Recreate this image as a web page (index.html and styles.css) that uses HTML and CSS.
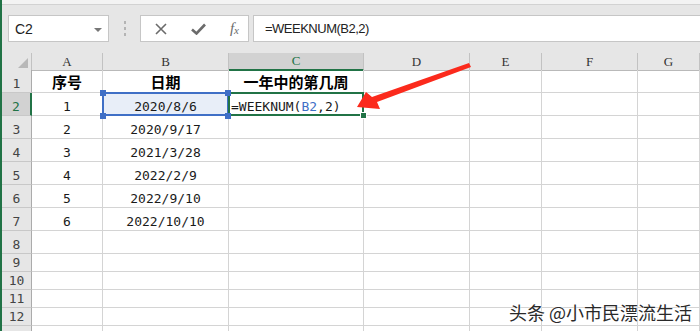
FILE: index.html
```html
<!DOCTYPE html>
<html lang="zh-CN">
<head>
<meta charset="UTF-8">
<title>WEEKNUM</title>
<link rel="stylesheet" href="styles.css">
</head>
<body>
<div class="app">
    <div class="topbar"></div>
    <div class="toolbar">
        <div class="namebox">
            <span>C2</span>
            <span class="drop"></span>
        </div>
        <div class="grip"><i></i><i></i><i></i></div>
        <div class="buttons">
            <svg width="12" height="12" viewBox="0 0 12 12"><path d="M1 1L11 11M11 1L1 11" stroke="#6b6b6b" stroke-width="1.6" fill="none"/></svg>
            <svg width="15" height="12" viewBox="0 0 15 12"><path d="M1 6.5L5.5 10.5L14 1.5" stroke="#6b6b6b" stroke-width="2.6" fill="none"/></svg>
            <span class="fx">f<sub>x</sub></span>
        </div>
        <div class="formula">=WEEKNUM(B2,2)</div>
    </div>

    <div class="sheet">
        <div class="row head">
            <div class="corner"><span class="tri"></span></div>
            <div class="col">A</div>
            <div class="col">B</div>
            <div class="col sel">C</div>
            <div class="col">D</div>
            <div class="col">E</div>
            <div class="col">F</div>
            <div class="col">G</div>
        </div>
        <div class="row">
            <div class="num">1</div>
            <div class="cell title">序号</div>
            <div class="cell title">日期</div>
            <div class="cell title">一年中的第几周</div>
            <div class="cell"></div><div class="cell"></div><div class="cell"></div><div class="cell"></div>
        </div>
        <div class="row">
            <div class="num sel">2</div>
            <div class="cell">1</div>
            <div class="cell ref">2020/8/6<i class="h tl"></i><i class="h tr"></i><i class="h bl"></i><i class="h br"></i></div>
            <div class="cell active">=WEEKNUM(<span class="blue">B2</span>,2)<i class="handle"></i></div>
            <div class="cell"></div><div class="cell"></div><div class="cell"></div><div class="cell"></div>
        </div>
        <div class="row">
            <div class="num">3</div>
            <div class="cell">2</div>
            <div class="cell">2020/9/17</div>
            <div class="cell"></div><div class="cell"></div><div class="cell"></div><div class="cell"></div><div class="cell"></div>
        </div>
        <div class="row">
            <div class="num">4</div>
            <div class="cell">3</div>
            <div class="cell">2021/3/28</div>
            <div class="cell"></div><div class="cell"></div><div class="cell"></div><div class="cell"></div><div class="cell"></div>
        </div>
        <div class="row">
            <div class="num">5</div>
            <div class="cell">4</div>
            <div class="cell">2022/2/9</div>
            <div class="cell"></div><div class="cell"></div><div class="cell"></div><div class="cell"></div><div class="cell"></div>
        </div>
        <div class="row">
            <div class="num">6</div>
            <div class="cell">5</div>
            <div class="cell">2022/9/10</div>
            <div class="cell"></div><div class="cell"></div><div class="cell"></div><div class="cell"></div><div class="cell"></div>
        </div>
        <div class="row">
            <div class="num">7</div>
            <div class="cell">6</div>
            <div class="cell">2022/10/10</div>
            <div class="cell"></div><div class="cell"></div><div class="cell"></div><div class="cell"></div><div class="cell"></div>
        </div>
        <div class="row">
            <div class="num">8</div>
            <div class="cell"></div><div class="cell"></div><div class="cell"></div><div class="cell"></div><div class="cell"></div><div class="cell"></div><div class="cell"></div>
        </div>
        <div class="row short">
            <div class="num">9</div>
            <div class="cell"></div><div class="cell"></div><div class="cell"></div><div class="cell"></div><div class="cell"></div><div class="cell"></div><div class="cell"></div>
        </div>
        <div class="row short">
            <div class="num">10</div>
            <div class="cell"></div><div class="cell"></div><div class="cell"></div><div class="cell"></div><div class="cell"></div><div class="cell"></div><div class="cell"></div>
        </div>
        <div class="row short">
            <div class="num">11</div>
            <div class="cell"></div><div class="cell"></div><div class="cell"></div><div class="cell"></div><div class="cell"></div><div class="cell"></div><div class="cell"></div>
        </div>
        <div class="row short">
            <div class="num">12</div>
            <div class="cell"></div><div class="cell"></div><div class="cell"></div><div class="cell"></div><div class="cell"></div><div class="cell"></div><div class="cell"></div>
        </div>
        <div class="row short">
            <div class="num"></div>
            <div class="cell"></div><div class="cell"></div><div class="cell"></div><div class="cell"></div><div class="cell"></div><div class="cell"></div><div class="cell"></div>
        </div>
    </div>
</div>

<svg class="arrow" width="700" height="331" viewBox="0 0 700 331">
    <polygon points="357,107 366,92 372,97 469,63 471,67 377,102 380,109" fill="#fb2a1c"/>
</svg>

<div class="mark">头条 @小市民漂流生活</div>
</body>
</html>
```

FILE: styles.css
```css
body {
    margin: 0;
    width: 700px;
    height: 331px;
    overflow: hidden;
    position: relative;
    background-color: #fff;
    font-family: "DejaVu Sans Mono", "Noto Sans CJK SC", monospace;
}
.app {
    height: 331px;
    border-left: 2px solid #217346;
}
.topbar {
    height: 4px;
    background-color: #f3f3f3;
    border-bottom: 1px solid #d2d2d2;
}
.toolbar {
    height: 48px;
    box-sizing: border-box;
    padding: 10px 0 0 6px;
    background-color: #e6e6e6;
    display: flex;
    align-items: flex-start;
}
.namebox, .buttons, .formula {
    height: 27px;
    box-sizing: border-box;
    background-color: #fff;
    border: 1px solid #c6c6c6;
    display: flex;
    align-items: center;
}
.namebox {
    width: 101px;
    padding: 0 6px;
    justify-content: space-between;
    font-family: "Liberation Sans", Arial, sans-serif;
    font-size: 14px;
    color: #222;
}
.drop {
    width: 0;
    height: 0;
    margin-top: 2px;
    border-left: 4px solid transparent;
    border-right: 4px solid transparent;
    border-top: 4px solid #777;
}
.grip {
    width: 31px;
    height: 27px;
    display: flex;
    flex-direction: column;
    align-items: center;
    justify-content: center;
    gap: 3px;
}
.grip i {
    width: 2px;
    height: 3px;
    background-color: #b4b4b4;
}
.buttons {
    width: 109px;
    padding: 0 9px 0 14px;
    justify-content: space-between;
}
.fx {
    font-family: "Liberation Serif", serif;
    font-style: italic;
    font-size: 15px;
    color: #6b6b6b;
    line-height: 1;
}
.fx sub {
    font-size: 11px;
    vertical-align: -1px;
}
.formula {
    flex: 1;
    margin-left: 4px;
    border-right: none;
    padding-left: 11px;
    font-family: "Liberation Sans", Arial, sans-serif;
    font-size: 13px;
    letter-spacing: -0.5px;
    color: #222;
}
.row {
    display: grid;
    grid-template-columns: 30px 71px 126px 135px 106px 72px 96px 62px;
    height: 23px;
}
.row.head {
    height: 17px;
}
.row.short {
    height: 18px;
}
.row > div {
    box-sizing: border-box;
    display: flex;
    align-items: flex-end;
    justify-content: center;
    line-height: 16px;
    font-size: 13px;
}
.head > div {
    background-color: #e6e6e6;
    border-right: 1px solid #c2c2c2;
    border-bottom: 1px solid #b9b9b9;
    align-items: center;
    font-family: "Liberation Serif", serif;
    font-size: 13px;
    color: #333;
}
.head .corner {
    justify-content: flex-end;
    align-items: flex-end;
    padding: 0 3px 2px 0;
}
.tri {
    width: 0;
    height: 0;
    border-left: 10px solid transparent;
    border-bottom: 10px solid #b8b8b8;
}
.head .col.sel {
    background-color: #d2d2d2;
    color: #217346;
    border-bottom: 2px solid #217346;
}
.num {
    background-color: #e6e6e6;
    border-right: 1px solid #ababab;
    border-bottom: 1px solid #c8c8c8;
    color: #444;
}
.num.sel {
    background-color: #d2d2d2;
    color: #217346;
    border-right: 2px solid #217346;
}
.cell {
    border-right: 1px solid #d4d4d4;
    border-bottom: 1px solid #d4d4d4;
    color: #1a1a1a;
}
.cell.title {
    font-family: "Noto Sans CJK SC", sans-serif;
    font-weight: bold;
    font-size: 15px;
    line-height: 18px;
    padding-bottom: 1px;
    color: #000;
}
.cell.ref {
    position: relative;
    background-color: #e8eef8;
}
.cell.ref::after {
    content: "";
    position: absolute;
    left: -1px;
    top: -1px;
    right: -1px;
    bottom: -1px;
    border: 2px solid #3f6fc6;
}
.h {
    position: absolute;
    width: 6px;
    height: 6px;
    background-color: #3f6fc6;
    z-index: 1;
}
.h.tl { left: -3px; top: -3px; }
.h.tr { right: -3px; top: -3px; }
.h.bl { left: -3px; bottom: -4px; }
.h.br { right: -3px; bottom: -4px; }
.cell.active {
    position: relative;
    justify-content: flex-start;
    padding-left: 2px;
}
.cell.active::after {
    content: "";
    position: absolute;
    left: -1px;
    top: -1px;
    right: -1px;
    bottom: -1px;
    border: 2px solid #217346;
}
.blue {
    color: #3f6fc6;
}
.handle {
    position: absolute;
    right: -4px;
    bottom: -4px;
    width: 5px;
    height: 5px;
    background-color: #217346;
    border: 1px solid #fff;
    z-index: 1;
}
.arrow {
    position: absolute;
    left: 0;
    top: 0;
    pointer-events: none;
}
.mark {
    position: absolute;
    right: 8px;
    bottom: 8px;
    font-family: "Noto Sans CJK SC", sans-serif;
    font-size: 18px;
    line-height: 22px;
    color: #2a2a2a;
    text-shadow: 0 0 2px #fff, 0 0 2px #fff;
}
```
